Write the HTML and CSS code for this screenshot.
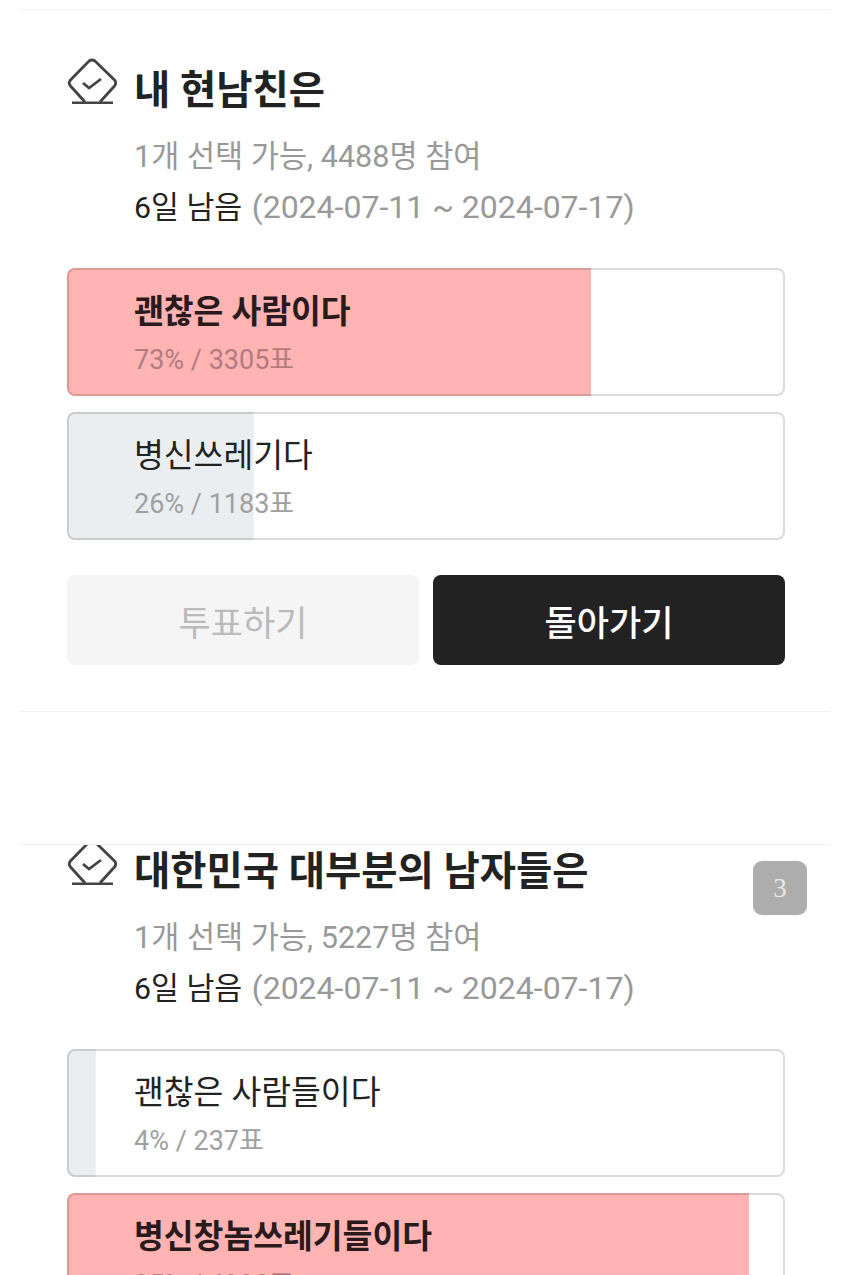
FILE: index.html
```html
<!DOCTYPE html>
<html lang="ko">
<head>
    <meta charset="UTF-8">
    <meta name="viewport" content="width=device-width, initial-scale=1.0">
    <title>투표</title>
    <link rel="stylesheet" href="styles.css">
</head>
<body>
    <div class="page">
        <section class="poll">
            <div class="poll-head">
                <svg class="poll-icon" viewBox="0 0 50 46">
                    <path d="M18 44 3.500 28Q1 25 3.500 22L22 3Q25 1 28 3L47.500 22Q50 25 47.500 28L33 44"/>
                    <path d="M5 45H46"/>
                    <path d="M16 25 22 30 34 21"/>
                </svg>
                <h2>내 현남친은</h2>
            </div>
            <p class="poll-info">1개 선택 가능, 4488명 참여</p>
            <p class="poll-date"><strong>6일 남음</strong> <span class="poll-range">(2024-07-11 ~ 2024-07-17)</span></p>

            <div class="option option-top" style="background-size: 73% 100%">
                <div class="option-label">괜찮은 사람이다</div>
                <div class="option-count">73% / 3305표</div>
            </div>
            <div class="option" style="background-size: 26% 100%">
                <div class="option-label">병신쓰레기다</div>
                <div class="option-count">26% / 1183표</div>
            </div>

            <div class="buttons">
                <button class="btn btn-vote">투표하기</button>
                <button class="btn btn-back">돌아가기</button>
            </div>
        </section>

        <section class="poll poll-second">
            <div class="poll-head">
                <svg class="poll-icon" viewBox="0 0 50 46">
                    <path d="M18 44 3.500 28Q1 25 3.500 22L22 3Q25 1 28 3L47.500 22Q50 25 47.500 28L33 44"/>
                    <path d="M5 45H46"/>
                    <path d="M16 25 22 30 34 21"/>
                </svg>
                <h2>대한민국 대부분의 남자들은</h2>
            </div>
            <p class="poll-info">1개 선택 가능, 5227명 참여</p>
            <p class="poll-date"><strong>6일 남음</strong> <span class="poll-range">(2024-07-11 ~ 2024-07-17)</span></p>

            <div class="option" style="background-size: 4% 100%">
                <div class="option-label">괜찮은 사람들이다</div>
                <div class="option-count">4% / 237표</div>
            </div>
            <div class="option option-top" style="background-size: 95% 100%">
                <div class="option-label">병신창놈쓰레기들이다</div>
                <div class="option-count">95% / 4990표</div>
            </div>
        </section>

        <div class="page-badge">3</div>
    </div>
</body>
</html>
```

FILE: styles.css
```css
body {
    margin: 0;
    background: white;
    font-family: Roboto, 'Noto Sans CJK KR', sans-serif;
}
.page {
    position: relative;
    width: 850px;
    height: 1275px;
    overflow: hidden;
    padding-top: 9px;
    box-sizing: border-box;
}
.poll {
    height: 703px;
    margin: 0 20px;
    padding: 47px 45px 0 47px;
    border-top: 1px solid #f0f0f0;
    border-bottom: 1px solid #f0f0f0;
    box-sizing: border-box;
}
.poll-second {
    height: 440px;
    margin-top: 132px;
    padding-top: 0;
    border-bottom: none;
    overflow: hidden;
}
.poll-second .poll-head {
    margin-top: -7px;
}
.poll-head {
    display: flex;
    align-items: center;
    gap: 17px;
    height: 58px;
}
.poll-icon {
    align-self: flex-start;
    flex-shrink: 0;
    width: 50px;
    height: 46px;
    margin-top: 1px;
    fill: none;
    stroke: #444;
    stroke-width: 2.8;
}
h2 {
    margin: 0;
    font-size: 39.4px;
    font-weight: 700;
    color: #222;
}
.poll-info,
.poll-date {
    margin: 0;
    padding-left: 67px;
    font-size: 30.6px;
    line-height: 51px;
    color: #999;
}
.poll-info {
    margin-top: 16px;
}
.poll-date {
    font-size: 30.3px;
}
.poll-date strong {
    font-weight: 400;
    color: #222;
}
.poll-range {
    margin-left: 2px;
    font-size: 32px;
}
.option {
    height: 128px;
    margin-top: 16px;
    padding: 19px 65px;
    box-sizing: border-box;
    border: 2px solid rgba(0,0,0,0.14);
    border-radius: 8px;
    background-color: white;
    background-image: linear-gradient(#ebeef0, #ebeef0);
    background-repeat: no-repeat;
    background-origin: border-box;
}
.poll-date + .option {
    margin-top: 35px;
}
.option-label {
    font-size: 32.4px;
    line-height: 46px;
    color: #222;
}
.option-count {
    margin-top: 7px;
    font-size: 27px;
    line-height: 36px;
    color: #a0a0a0;
}
.option-top {
    background-image: linear-gradient(#ffb3b3, #ffb3b3);
}
.option-top .option-label {
    font-weight: 700;
    color: #2a1a1c;
}
.option-top .option-count {
    color: #b27c7f;
}
.buttons {
    display: flex;
    gap: 14px;
    margin-top: 35px;
}
.btn {
    flex: 1;
    height: 90px;
    border: none;
    border-radius: 8px;
    font-family: inherit;
    font-size: 35px;
}
.btn-vote {
    background: #f5f5f5;
    color: #bbb;
}
.btn-back {
    background: #222;
    color: white;
    font-weight: 500;
}
.page-badge {
    position: absolute;
    left: 753px;
    top: 861px;
    width: 54px;
    height: 54px;
    border-radius: 9px;
    background: #adadad;
    color: #e8e8e8;
    font-family: 'Liberation Serif', serif;
    font-size: 27px;
    line-height: 54px;
    text-align: center;
}
```
